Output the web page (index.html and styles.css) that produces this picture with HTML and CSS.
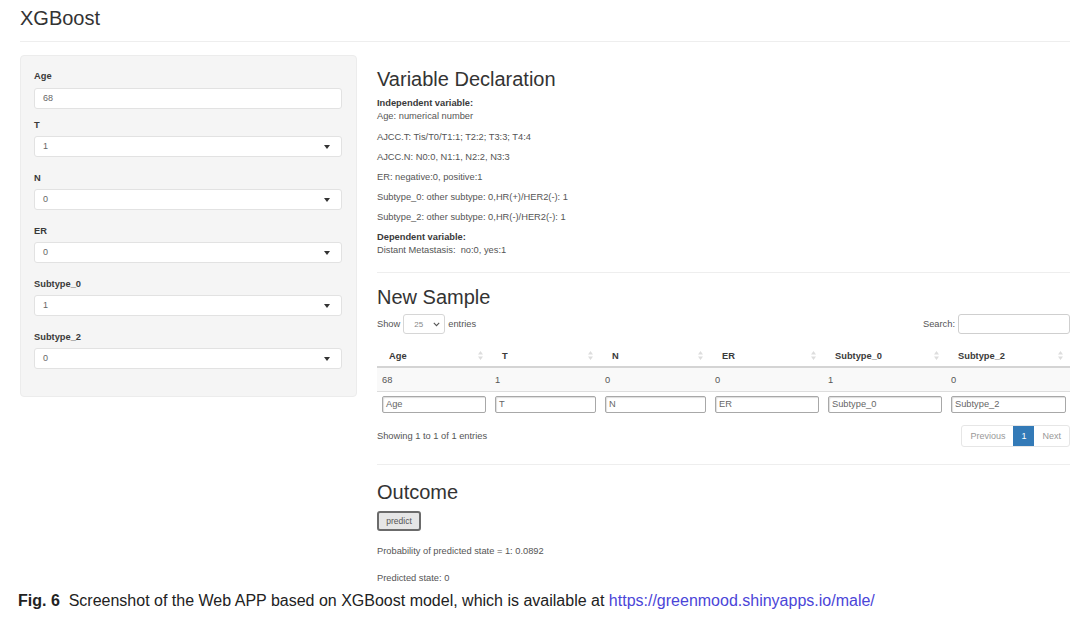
FILE: index.html
```html
<!DOCTYPE html>
<html lang="en">

<head>
    <title>XGBoost</title>
    <link rel="stylesheet" href="styles.css">
</head>

<body>
    <div class="page">
        <div class="navbar">XGBoost</div>

        <div class="layout">
            <div class="sidebar">
                <div class="group text-group">
                    <label>Age</label>
                    <div class="field">68</div>
                </div>
                <div class="group">
                    <label>T</label>
                    <div class="field select">1<span class="caret"></span></div>
                </div>
                <div class="group">
                    <label>N</label>
                    <div class="field select">0<span class="caret"></span></div>
                </div>
                <div class="group">
                    <label>ER</label>
                    <div class="field select">0<span class="caret"></span></div>
                </div>
                <div class="group">
                    <label>Subtype_0</label>
                    <div class="field select">1<span class="caret"></span></div>
                </div>
                <div class="group last">
                    <label>Subtype_2</label>
                    <div class="field select">0<span class="caret"></span></div>
                </div>
            </div>

            <div class="main">
                <h3>Variable Declaration</h3>
                <div class="decl">
                    <div class="vhead">Independent variable:</div>
                    <p class="first">Age: numerical number</p>
                    <p>AJCC.T: Tis/T0/T1:1; T2:2; T3:3; T4:4</p>
                    <p>AJCC.N: N0:0, N1:1, N2:2, N3:3</p>
                    <p>ER: negative:0, positive:1</p>
                    <p>Subtype_0: other subtype: 0,HR(+)/HER2(-): 1</p>
                    <p>Subtype_2: other subtype: 0,HR(-)/HER2(-): 1</p>
                    <div class="vhead">Dependent variable:</div>
                    <p class="last">Distant Metastasis:&nbsp; no:0, yes:1</p>
                </div>

                <hr>

                <h3 class="sample-title">New Sample</h3>
                <div class="dt-top">
                    <div class="length">
                        Show
                        <div class="length-select">25
                            <svg width="7" height="5" viewBox="0 0 7 5"><path d="M0.8 0.8 L3.5 3.6 L6.2 0.8" fill="none" stroke="#555" stroke-width="1.1"/></svg>
                        </div>
                        entries
                    </div>
                    <div class="search">
                        Search:
                        <div class="search-box"></div>
                    </div>
                </div>

                <table class="dt">
                    <colgroup>
                        <col class="w-113">
                        <col class="w-110">
                        <col class="w-110">
                        <col class="w-113">
                        <col class="w-123">
                        <col class="w-124">
                    </colgroup>
                    <thead>
                        <tr>
                            <th><div class="th-in">Age<svg class="sort" width="5" height="9" viewBox="0 0 5 9"><path d="M2.5 0 L5 3.5 L0 3.5 Z M2.5 9 L5 5.5 L0 5.5 Z" fill="#ddd"/></svg></div></th>
                            <th><div class="th-in">T<svg class="sort" width="5" height="9" viewBox="0 0 5 9"><path d="M2.5 0 L5 3.5 L0 3.5 Z M2.5 9 L5 5.5 L0 5.5 Z" fill="#ddd"/></svg></div></th>
                            <th><div class="th-in">N<svg class="sort" width="5" height="9" viewBox="0 0 5 9"><path d="M2.5 0 L5 3.5 L0 3.5 Z M2.5 9 L5 5.5 L0 5.5 Z" fill="#ddd"/></svg></div></th>
                            <th><div class="th-in">ER<svg class="sort" width="5" height="9" viewBox="0 0 5 9"><path d="M2.5 0 L5 3.5 L0 3.5 Z M2.5 9 L5 5.5 L0 5.5 Z" fill="#ddd"/></svg></div></th>
                            <th><div class="th-in">Subtype_0<svg class="sort" width="5" height="9" viewBox="0 0 5 9"><path d="M2.5 0 L5 3.5 L0 3.5 Z M2.5 9 L5 5.5 L0 5.5 Z" fill="#ddd"/></svg></div></th>
                            <th><div class="th-in">Subtype_2<svg class="sort" width="5" height="9" viewBox="0 0 5 9"><path d="M2.5 0 L5 3.5 L0 3.5 Z M2.5 9 L5 5.5 L0 5.5 Z" fill="#ddd"/></svg></div></th>
                        </tr>
                    </thead>
                    <tbody>
                        <tr class="odd">
                            <td>68</td>
                            <td>1</td>
                            <td>0</td>
                            <td>0</td>
                            <td>1</td>
                            <td>0</td>
                        </tr>
                        <tr class="filters">
                            <td><div class="filter">Age</div></td>
                            <td><div class="filter">T</div></td>
                            <td><div class="filter">N</div></td>
                            <td><div class="filter">ER</div></td>
                            <td><div class="filter">Subtype_0</div></td>
                            <td><div class="filter">Subtype_2</div></td>
                        </tr>
                    </tbody>
                </table>

                <div class="dt-bottom">
                    <div class="info">Showing 1 to 1 of 1 entries</div>
                    <div class="paging">
                        <span class="pg">Previous</span>
                        <span class="pg current">1</span>
                        <span class="pg">Next</span>
                    </div>
                </div>

                <hr class="hr-outcome">

                <h3 class="outcome-title">Outcome</h3>
                <button class="predict">predict</button>
                <p class="result">Probability of predicted state = 1: 0.0892</p>
                <p class="result second">Predicted state: 0</p>
            </div>
        </div>

        <div class="caption"><b>Fig. 6</b>&nbsp; Screenshot of the Web APP based on XGBoost model, which is available at <a href="#">https://greenmood.shinyapps.io/male/</a></div>
    </div>
</body>

</html>
```

FILE: styles.css
```css
body {
    margin: 0;
    background-color: #ffffff;
    font-family: "Liberation Sans", Arial, sans-serif;
    color: #444;
}

.page {
    padding: 0 10px 0 20px;
}

.navbar {
    height: 42px;
    box-sizing: border-box;
    padding-top: 6px;
    font-size: 20px;
    line-height: 24px;
    color: #333;
    border-bottom: 1px solid #eeeeee;
}

.layout {
    display: flex;
    gap: 20px;
    margin-top: 13px;
}

/* sidebar */
.sidebar {
    width: 337px;
    box-sizing: border-box;
    align-self: flex-start;
    padding: 14px 14px 27px 13px;
    background-color: #f5f5f5;
    border: 1px solid #ececec;
    border-radius: 4px;
}

.group {
    margin-bottom: 14.5px;
}

.group.text-group {
    margin-bottom: 10px;
}

.group.last {
    margin-bottom: 0;
}

label {
    display: block;
    font-size: 9.3px;
    line-height: 12px;
    font-weight: bold;
    color: #3a3a3a;
    margin-bottom: 5.5px;
}

.field {
    height: 21px;
    box-sizing: border-box;
    padding-left: 8px;
    background-color: #ffffff;
    border: 1px solid #e2e2e2;
    border-radius: 3px;
    font-size: 9px;
    line-height: 19px;
    color: #666;
    display: flex;
    align-items: center;
}

.field.select {
    justify-content: space-between;
    padding-right: 11px;
}

.caret {
    width: 0;
    height: 0;
    border-left: 3.5px solid transparent;
    border-right: 3.5px solid transparent;
    border-top: 4px solid #333;
}

/* main */
.main {
    flex: 1;
    padding-top: 12px;
    font-size: 9.3px;
}

h3 {
    margin: 0;
    font-size: 20px;
    line-height: 24px;
    font-weight: normal;
    color: #333;
}

.decl {
    margin-top: 6px;
    line-height: 13px;
}

.vhead {
    font-weight: bold;
    color: #3a3a3a;
}

.decl p {
    margin: 0 0 7px 0;
    color: #555;
}

.decl p.first {
    margin-bottom: 8px;
}

.decl p.last {
    margin-bottom: 0;
}

hr {
    border: none;
    border-top: 1px solid #eeeeee;
    margin: 14.5px 0 0 0;
}

.sample-title {
    margin-top: 12.5px;
}

.dt-top {
    display: flex;
    justify-content: space-between;
    align-items: center;
    margin-top: 5px;
    height: 20px;
    color: #555;
}

.length {
    display: flex;
    align-items: center;
    gap: 3px;
}

.length-select {
    width: 42px;
    height: 20px;
    box-sizing: border-box;
    border: 1px solid #d6d6d6;
    border-radius: 3px;
    padding: 0 4px 0 10px;
    font-size: 8px;
    color: #888;
    display: flex;
    align-items: center;
    justify-content: space-between;
}

.search {
    display: flex;
    align-items: center;
    gap: 3px;
}

.search-box {
    width: 112px;
    height: 20px;
    box-sizing: border-box;
    border: 1px solid #cfcfcf;
    border-radius: 3px;
}

/* table */
.dt {
    width: 100%;
    table-layout: fixed;
    border-collapse: collapse;
    margin-top: 11px;
}

.w-110 { width: 110px; }
.w-113 { width: 113px; }
.w-123 { width: 123px; }
.w-124 { width: 124px; }

th {
    height: 21px;
    padding: 0 7px 0 12px;
    text-align: left;
    font-weight: bold;
    color: #3a3a3a;
    border-bottom: 2px solid #d4d4d4;
}

.th-in {
    display: flex;
    justify-content: space-between;
    align-items: center;
}

td {
    padding: 0 0 0 5px;
    color: #555;
}

tr.odd td {
    height: 23px;
    background-color: #f9f9f9;
    border-bottom: 1px solid #dddddd;
}

tr.filters td {
    height: 25px;
    padding-right: 4px;
}

.filter {
    height: 17px;
    box-sizing: border-box;
    border: 1px solid #a8a8a8;
    border-radius: 2px;
    box-shadow: inset 1px 1px 1px #ddd;
    padding-left: 3px;
    line-height: 15px;
    color: #666;
}

.dt-bottom {
    display: flex;
    justify-content: space-between;
    align-items: center;
    margin-top: 8px;
    height: 22px;
    color: #555;
}

.paging {
    display: flex;
    height: 22px;
    border: 1px solid #e6e6e6;
    border-radius: 3px;
    box-sizing: border-box;
}

.pg {
    display: flex;
    align-items: center;
    padding: 0 8px;
    color: #999;
    font-size: 9px;
}

.pg.current {
    background-color: #337ab7;
    color: #ffffff;
    padding: 0 8px;
}

.hr-outcome {
    margin-top: 17px;
}

.outcome-title {
    margin-top: 14.5px;
}

.predict {
    display: block;
    margin-top: 7px;
    width: 44px;
    height: 20px;
    padding: 0;
    background-color: #e6e6e6;
    border: 2px solid #6b6b6b;
    border-radius: 3px;
    font-family: "Liberation Sans", Arial, sans-serif;
    font-size: 8.5px;
    color: #555;
}

.result {
    margin: 14.5px 0 0 0;
    line-height: 13px;
    color: #555;
}

.result.second {
    margin-top: 14px;
}

.caption {
    margin: 6.5px 0 0 -2px;
    font-family: "Liberation Sans", Arial, sans-serif;
    font-size: 16px;
    line-height: 18px;
    color: #222;
}

.caption b {
    font-weight: bold;
}

.caption a {
    color: #4b45d8;
    text-decoration: none;
}
```
